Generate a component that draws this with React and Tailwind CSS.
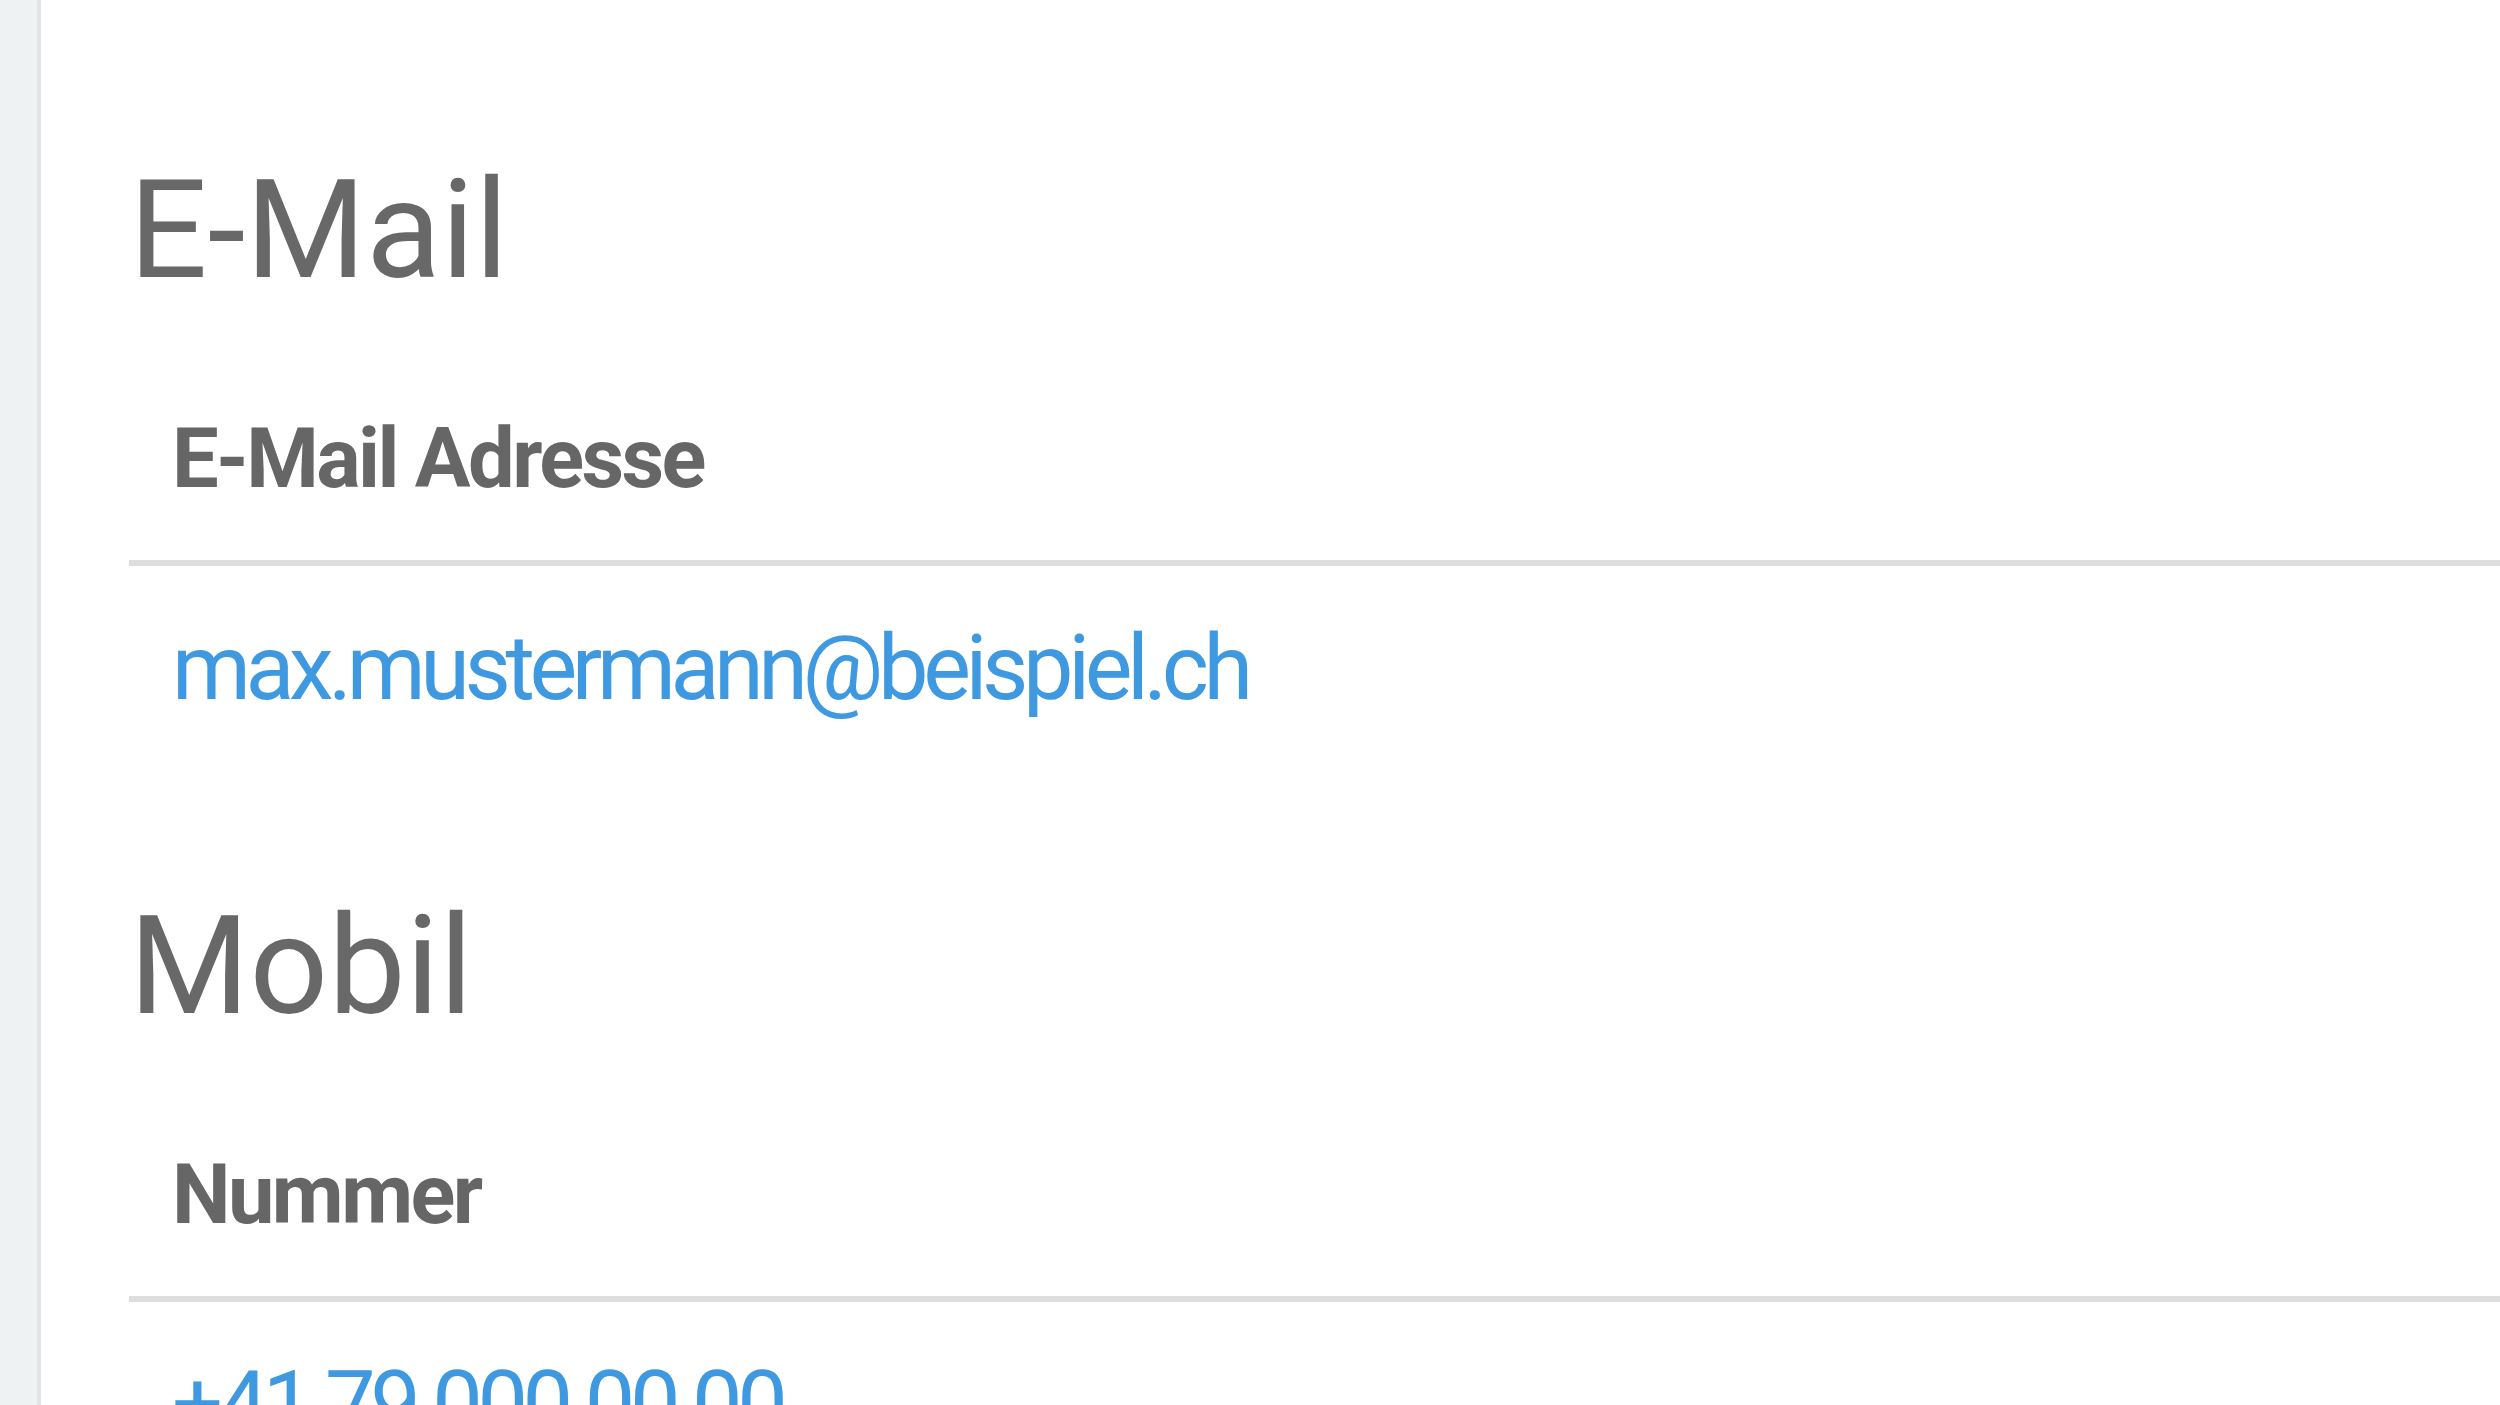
import React from "react";

function Section({ title, label, value, href }) {
  return (
    <section className="pt-[163px] pb-[17px]">
      <h2 className="text-[138px] leading-[135px] font-normal text-[#686868] mb-[111px]">{title}</h2>
      <table className="w-full border-collapse">
        <thead>
          <tr className="border-b-[6px] border-[#dddddd]">
            <th className="text-left pl-[43px] pb-[51px] text-[83px] leading-[100px] font-bold text-[#666666] tracking-[-2.6px]">
              {label}
            </th>
          </tr>
        </thead>
        <tbody>
          <tr>
            <td className="pl-[43px] pt-[53px] text-[90px] leading-[100px] tracking-[-5.4px]">
              <a href={href} className="text-[#3f99e1] no-underline">{value}</a>
            </td>
          </tr>
        </tbody>
      </table>
    </section>
  );
}

export default function App() {
  return (
    <div className="flex h-[1405px] overflow-hidden bg-white" style={{ fontFamily: "Roboto, 'Noto Sans', sans-serif" }}>
      <div className="w-[41px] shrink-0 bg-[#eef2f3] border-r-[4px] border-[#e2e5e6]" />
      <div className="flex-1 pl-[88px]">
        <Section title="E-Mail" label="E-Mail Adresse" value="max.mustermann@beispiel.ch" href="mailto:max.mustermann@beispiel.ch" />
        <Section title="Mobil" label="Nummer" value="+41 79 000 00 00" href="tel:+41790000000" />
      </div>
    </div>
  );
}
